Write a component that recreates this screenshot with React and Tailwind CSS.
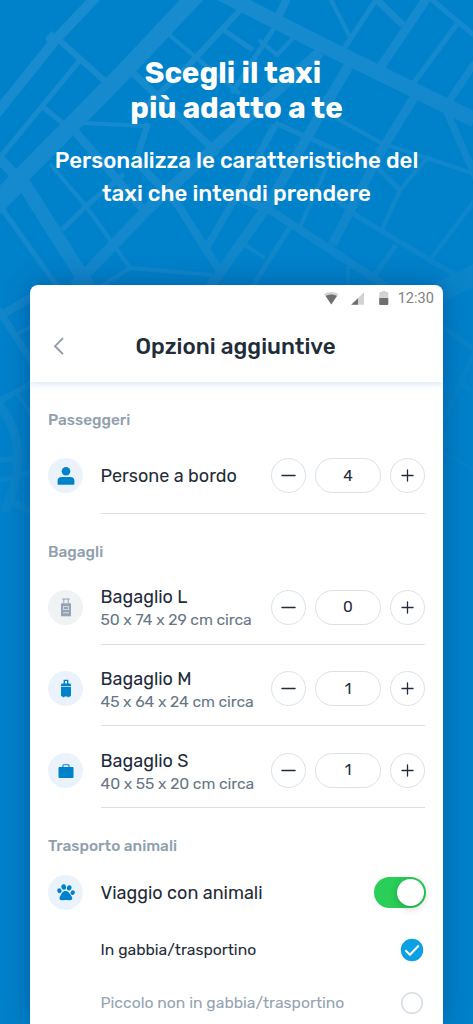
import React from 'react';

const roads = [
  { w: 10, d: 'M96 -3 L57 38 L-4 114' },
  { w: 10, d: 'M48 35 L58 43' },
  { w: 17, d: 'M199 -8 L118 78 L15 182 L-5 204' },
  { w: 6, d: 'M57 38 L107 83' },
  { w: 5, d: 'M80 60 L-2 160' },
  { w: 5, d: 'M43 107 L70 129' },
  { w: 10, d: 'M-3 156 L25 186' },
  { w: 14, d: 'M22 181 L92 292' },
  { w: 5, d: 'M-2 203 L57 286' },
  { w: 6, d: 'M-2 212 L24 186' },
  { w: 4, d: 'M50 164 L86 206 L130 268 L212 275' },
  { w: 4, d: 'M130 268 L100 287' },
  { w: 8, d: 'M72 128 L142 208' },
  { w: 5, d: 'M62 230 L86 206 L124 174' },
  { w: 11, d: 'M74 286 L150 207 L240 124 L320 52' },
  { w: 4, d: 'M83 123 L147 126' },
  { w: 6, d: 'M148 123 L138 155' },
  { w: 4, d: 'M168 34 L240 94' },
  { w: 7, d: 'M130 70 L218 154' },
  { w: 6, d: 'M242 8 L188 66 L140 112' },
  { w: 5, d: 'M222 29 L253 50' },
  { w: 15, d: 'M218 -8 L316 42 L475 120' },
  { w: 8, d: 'M140 165 L178 205 L223 276' },
  { w: 7, d: 'M275 125 L243 185 L204 252' },
  { w: 10, d: 'M210 287 L268 205 L300 150 L318 118 L352 60' },
  { w: 8, d: 'M288 -4 L277 20' },
  { w: 4, d: 'M330 -2 L350 37' },
  { w: 5, d: 'M378 -3 L343 50' },
  { w: 7, d: 'M373 -4 L403 25' },
  { w: 9, d: 'M429 -5 L380 68' },
  { w: 5, d: 'M430 -2 L475 36' },
  { w: 5, d: 'M457 24 L413 84' },
  { w: 7, d: 'M475 63 L445 107' },
  { w: 7, d: 'M446 110 L476 178' },
  { w: 9, d: 'M415 96 L383 148 L332 245' },
  { w: 4, d: 'M336 118 L383 144 L427 158 L475 174' },
  { w: 4, d: 'M427 158 L400 190 L382 230' },
  { w: 5, d: 'M370 160 L400 190' },
  { w: 5, d: 'M275 123 L370 165' },
  { w: 8, d: 'M222 190 L273 212 L398 294' },
  { w: 5, d: 'M335 198 L355 215 L430 260 L475 287' },
  { w: 4, d: 'M475 200 L430 260' },
  { w: 5, d: 'M396 245 L370 282' },
  { w: 5, d: 'M290 227 L253 286' },
  { w: 4, d: 'M245 245 L265 258' },
  { w: 4, d: 'M330 160 L300 227' },
  { w: 4, d: 'M348 267 L348 286' },
  { w: 5, d: 'M232 93 L276 25' },
  { w: 4, d: 'M259 40 L277 55 L295 36' },
  { w: 20, d: 'M440 292 L480 272' },
  { w: 8, d: 'M-2 317 L32 297' },
  { w: 7, d: 'M-2 309 L32 362' },
  { w: 4, d: 'M15 335 L32 326' },
  { w: 6, d: 'M-2 402 L32 383' },
  { w: 4, d: 'M17 393 L32 416' },
  { w: 9, d: 'M-3 403 C22 430 25 470 5 512' },
  { w: 5, d: 'M-2 460 L14 459' },
  { w: 5, d: 'M-2 481 L32 472' },
  { w: 7, d: 'M5 498 L32 512' },
  { w: 5, d: 'M443 327 L475 350' },
  { w: 5, d: 'M475 352 L443 420' },
  { w: 5, d: 'M461 383 L475 394' },
  { w: 3, d: 'M443 452 L475 470' },
];

const CityMap = () => (
  <svg className="absolute inset-0" width="473" height="1024" viewBox="0 0 473 1024" fill="none">
    <defs>
      <linearGradient id="road" gradientUnits="userSpaceOnUse" x1="0" y1="0" x2="200" y2="500">
        <stop offset="0" stopColor="#1a8dd0" />
        <stop offset="0.5" stopColor="#1388cc" />
        <stop offset="1" stopColor="#0783c9" />
      </linearGradient>
    </defs>
    {roads.map((road) => (
      <path key={road.d} d={road.d} stroke="url(#road)" strokeWidth={road.w} />
    ))}
  </svg>
);

const StatusIcons = () => (
  <svg width="66" height="15" viewBox="0 0 66 15">
    <path d="M0 3.3C4 .2 10.500 .2 14.500 3.300L7.250 13.500Z" fill="#d3d3d3" />
    <path d="M1.700 4.900C5 2.900 9.500 2.900 12.800 4.900L7.250 13.500Z" fill="#6f6f6f" />
    <path d="M27.200 13.800H40V1.200Z" fill="#d3d3d3" />
    <path d="M27.200 13.800H34V7.200Z" fill="#6f6f6f" />
    <path d="M55.200 7V2Q55.200 1 56.200 1H57.800V0H61.700V1H63.300Q64.300 1 64.300 2V7Z" fill="#d3d3d3" />
    <path d="M55.200 7H64.300V13Q64.300 14 63.300 14H56.200Q55.200 14 55.200 13Z" fill="#6f6f6f" />
  </svg>
);

const PersonIcon = () => (
  <svg width="18" height="20" viewBox="0 0 18 20" fill="#0082cb">
    <circle cx="9" cy="5.200" r="4.300" />
    <path d="M.6 18.700V15.200Q.6 11 4.800 11H13.200Q17.400 11 17.400 15.200V17.700Q17.400 18.700 16.400 18.700Z" />
  </svg>
);

const TrolleyIcon = () => (
  <svg width="12" height="19" viewBox="0 0 12 19" fill="#94a3b3">
    <path d="M2.200 .4H9.800V1.400H8.700V5.400H7.700V1.400H4.300V5.400H3.300V1.400H2.200Z" />
    <path d="M1 5.300H11V18.300H1Z" />
    <path d="M3 8H9V12H3ZM3 14.200H9V15.200H3Z" fill="#d3dae0" />
    <path d="M4 9H8V11H4Z" />
  </svg>
);

const SuitcaseIcon = () => (
  <svg width="12" height="19" viewBox="0 0 12 19" fill="#0082cb">
    <path d="M4.300 5V1.400H7.700V5" fill="none" stroke="#0082cb" strokeWidth="1.400" />
    <path d="M2.300 4.600H9.700Q11 4.600 11 5.800V7H1V5.800Q1 4.600 2.300 4.600Z" />
    <path d="M1 8H11V16.200Q11 17.500 9.700 17.500H9.300V18.300H7.700V17.500H4.300V18.300H2.700V17.500H2.300Q1 17.500 1 16.200Z" />
    <path d="M1 7H11V8H1Z" fill="#a9d3ec" />
  </svg>
);

const BriefcaseIcon = () => (
  <svg width="16" height="16" viewBox="0 0 16 16">
    <path d="M5 4.500V2.600Q5 1.800 5.800 1.800H10.200Q11 1.800 11 2.600V4.500" fill="none" stroke="#0082cb" strokeWidth="1.100" />
    <rect x=".5" y="4" width="15" height="11" rx="1" fill="#0082cb" />
  </svg>
);

const PawIcon = () => (
  <svg width="18" height="17" viewBox="0 0 18 17" fill="#0082cb">
    <ellipse cx="2.400" cy="6.800" rx="2.100" ry="2.400" transform="rotate(-22 2.400 6.800)" />
    <ellipse cx="6.700" cy="3" rx="2.400" ry="2.800" transform="rotate(-8 6.700 3)" />
    <ellipse cx="12.200" cy="3.900" rx="2.300" ry="2.700" transform="rotate(16 12.200 3.900)" />
    <ellipse cx="15.700" cy="8.600" rx="2.100" ry="2.300" transform="rotate(26 15.700 8.600)" />
    <path d="M5.300 8.600C6.800 6.500 10.600 6.500 12.200 8.900L14.700 12.500C16 14.500 14.900 16.300 12.900 16.200L8.800 16.100L4.800 16.200C2.600 16.300 1.800 14.500 3 12.500Z" />
  </svg>
);

const Avatar = ({ muted, children }) => (
  <div className={`flex h-[35px] w-[35px] shrink-0 items-center justify-center rounded-full ${muted ? 'bg-[#f0f2f4]' : 'bg-[#eaf3fb]'}`}>
    {children}
  </div>
);

const Stepper = ({ value }) => (
  <div className="flex shrink-0 items-center gap-[9px] text-[#1f2c3a]">
    <button className="flex h-[35px] w-[35px] items-center justify-center rounded-full border border-[#dae1e8]">
      <svg width="15" height="15" viewBox="0 0 15 15">
        <path d="M1 7.500H14" stroke="currentColor" strokeWidth="1.500" strokeLinecap="round" />
      </svg>
    </button>
    <div className="flex h-[35px] w-[66px] items-center justify-center rounded-full border border-[#dae1e8] pt-px text-[15.400px] leading-none">
      {value}
    </div>
    <button className="flex h-[35px] w-[35px] items-center justify-center rounded-full border border-[#dae1e8]">
      <svg width="15" height="15" viewBox="0 0 15 15">
        <path d="M2 7.500H13M7.500 2V13" stroke="currentColor" strokeWidth="1.300" strokeLinecap="round" />
      </svg>
    </button>
  </div>
);

const luggage = [
  { name: 'Bagaglio L', size: '50 x 74 x 29 cm circa', value: 0, icon: <TrolleyIcon />, muted: true },
  { name: 'Bagaglio M', size: '45 x 64 x 24 cm circa', value: 1, icon: <SuitcaseIcon /> },
  { name: 'Bagaglio S', size: '40 x 55 x 20 cm circa', value: 1, icon: <BriefcaseIcon /> },
];

const App = () => {
  return (
    <div className="relative h-[1024px] w-[473px] overflow-hidden bg-[#0082cb] font-['Rubik','Roboto',sans-serif]">
      <CityMap />
      <div className="relative flex h-full flex-col">
        <header className="h-[284.600px] shrink-0 pt-[55px] text-center text-white">
          <h1 className="pr-[7px] text-[29.600px] leading-[35px] font-bold">Scegli il taxi</h1>
          <h1 className="text-[29.600px] leading-[35px] font-bold">più adatto a te</h1>
          <p className="mt-[19px] text-[22.250px] leading-[33px] font-medium">
            Personalizza le caratteristiche del
            <br />
            taxi che intendi prendere
          </p>
        </header>

        <main className="ml-[30px] flex w-[413.300px] grow flex-col rounded-t-[8px] bg-white text-[#1f2c3a] shadow-[0_0_30px_rgba(0,45,100,0.4)]">
          <div className="h-[97.400px] shrink-0 rounded-t-[8px] shadow-[0_2px_6px_rgba(0,110,200,0.16)]">
            <div className="flex h-[28px] items-center justify-end pr-[9.500px]">
              <StatusIcons />
              <span className="ml-[8px] pt-[2px] font-['Roboto'] text-[14.500px] leading-none text-[#808080]">12:30</span>
            </div>
            <div className="flex h-[67px] items-center pl-[22px]">
              <svg width="14" height="20" viewBox="0 0 14 20" fill="none">
                <path d="M11 2.200L3 10.200L11 18.200" stroke="#8a99ab" strokeWidth="1.800" />
              </svg>
              <h2 className="ml-[69.500px] pt-[3px] text-[22.400px] leading-none font-medium">Opzioni aggiuntive</h2>
            </div>
          </div>

          <div className="flex flex-col pr-[18.300px] pl-[18px]">
            <h3 className="mt-[28px] text-[15.400px] leading-[20px] font-medium text-[#8f9fae]">Passeggeri</h3>
            <div className="mt-[28.400px] flex items-center">
              <Avatar><PersonIcon /></Avatar>
              <span className="ml-[17.500px] grow text-[18px] leading-none">Persone a bordo</span>
              <Stepper value={4} />
            </div>
            <div className="mt-[19.300px] ml-[53px] h-px bg-[#d8dfe6]" />

            <h3 className="mt-[28px] text-[15.400px] leading-[20px] font-medium text-[#8f9fae]">Bagagli</h3>
            <div className="mt-[28.200px] flex flex-col gap-[26px]">
              {luggage.map((item) => (
                <div key={item.name} className="h-[55.600px]">
                  <div className="flex h-[35px] items-center">
                    <Avatar muted={item.muted}>{item.icon}</Avatar>
                    <div className="ml-[17.500px] grow pt-[2px]">
                      <div className="text-[18px] leading-[24px]">{item.name}</div>
                      <div className="text-[15.700px] leading-[22px] tracking-[-0.100px] text-[#667686]">{item.size}</div>
                    </div>
                    <Stepper value={item.value} />
                  </div>
                  <div className="mt-[19px] ml-[53px] h-px bg-[#d8dfe6]" />
                </div>
              ))}
            </div>

            <h3 className="mt-[27px] text-[15.400px] leading-[20px] font-medium text-[#8f9fae]">Trasporto animali</h3>
            <div className="mt-[19.500px] flex items-center">
              <Avatar><PawIcon /></Avatar>
              <span className="ml-[17.500px] grow text-[18px] leading-none">Viaggio con animali</span>
              <div className="-mr-px flex h-[31px] w-[52px] items-center justify-end rounded-full bg-[#29cf57] pr-[2px]">
                <div className="h-[27px] w-[27px] rounded-full bg-white shadow-[0_2px_8px_rgba(0,0,0,0.22)]" />
              </div>
            </div>
            <div className="mt-[28px] flex h-[24px] items-center justify-between pr-[1px] pl-[52.500px]">
              <span className="text-[15.700px] leading-none">In gabbia/trasportino</span>
              <svg width="24" height="24" viewBox="0 0 24 24" fill="none">
                <circle cx="12" cy="12" r="11.200" fill="#0b9fe3" />
                <path d="M5.400 12.200L9.900 16.700L18.800 7.500" stroke="#fff" strokeWidth="2" />
              </svg>
            </div>
            <div className="mt-[29px] flex h-[24px] items-center justify-between pr-[1px] pl-[52.500px]">
              <span className="text-[15.700px] leading-none text-[#94a3b3]">Piccolo non in gabbia/trasportino</span>
              <svg width="24" height="24" viewBox="0 0 24 24" fill="none">
                <circle cx="12" cy="12" r="10.300" stroke="#d5dde5" strokeWidth="1.500" />
              </svg>
            </div>
          </div>
        </main>
      </div>
    </div>
  );
};

export default App;
